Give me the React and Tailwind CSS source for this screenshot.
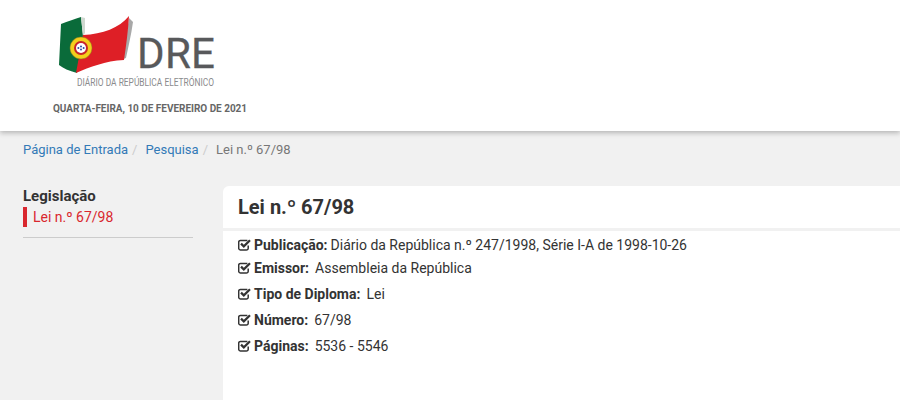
const rows = [
  ["Publicação:", "Diário da República n.º 247/1998, Série I-A de 1998-10-26", "h-[20px]", "ml-[3px]"],
  ["Emissor:", "Assembleia da República", "h-[26px]", "ml-[6px]"],
  ["Tipo de Diploma:", "Lei", "h-[26px]", "ml-[6px]"],
  ["Número:", "67/98", "h-[26px]", "ml-[6px]"],
  ["Páginas:", "5536 - 5546", "h-[26px]", "ml-[6px]"],
];

function Check() {
  return (
    <svg width="13" height="13" viewBox="0 0 13 13" className="shrink-0 mr-[3px] mb-[2px]" fill="none">
      <path d="M10.2 7.4V10.2A1.8 1.8 0 0 1 8.4 12H2.4A1.8 1.8 0 0 1 .7 10.2V4.2A1.8 1.8 0 0 1 2.4 2.4H9.4" stroke="#333" strokeWidth="1.5" />
      <path d="M3 5.6L5.8 8.4L12 2.2" stroke="#333" strokeWidth="2.2" />
    </svg>
  );
}

function Logo() {
  return (
    <svg width="200" height="82" viewBox="0 0 200 82" className="block">
      <path d="M74 8L78 12C76 26 73 38 71 48L66 50C70 34 72 22 74 8Z" fill="#a8a8a8" />
      <path d="M6 14C13 11 20 9 26 7L28 26L22 63C14 61 8 58 4 55Z" fill="#0a6b3a" />
      <path d="M26 7L30 8L30 23L28 26Z" fill="#cfd8d0" />
      <path d="M28 25C48 24 64 18 74 6C73 22 71 36 69 50C50 51 35 57 21 63Z" fill="#de1f26" />
      <circle cx="26" cy="38" r="11" fill="#f4cf1c" />
      <circle cx="26" cy="38" r="11" fill="none" stroke="#8a7a1c" strokeWidth="0.5" />
      <circle cx="26" cy="38" r="7" fill="#c8242b" />
      <circle cx="26" cy="38" r="5" fill="#fff" />
      <circle cx="26" cy="36.4" r="1" fill="#2f4fa0" />
      <circle cx="26" cy="39.6" r="1" fill="#2f4fa0" />
      <circle cx="23.4" cy="38" r="1" fill="#2f4fa0" />
      <circle cx="28.6" cy="38" r="1" fill="#2f4fa0" />
      <text x="82 110 136" y="57.5" fontFamily="Roboto, sans-serif" fontSize="42" fill="#58595b" stroke="#58595b" strokeWidth="0.3">DRE</text>
      <text x="22" y="76" textLength="137" lengthAdjust="spacingAndGlyphs" fontFamily="Roboto, sans-serif" fontSize="10" fill="#8a8b8d">DIÁRIO DA REPÚBLICA ELETRÓNICO</text>
    </svg>
  );
}

export default function App() {
  return (
    <div className="w-[900px] h-[400px] overflow-hidden bg-[#f1f1f1] font-['Roboto',sans-serif] text-sm text-[#333]">
      <header className="h-[131px] bg-white shadow-[0_2px_5px_rgba(0,0,0,0.25)] pt-[10px]">
        <div className="pl-[55px]"><Logo /></div>
        <div className="pl-[53px] mt-[10px] text-[10px] leading-[14px] font-bold text-[#666] tracking-[-0.02px]">QUARTA-FEIRA, 10 DE FEVEREIRO DE 2021</div>
      </header>
      <nav className="flex items-center pl-[23px] h-[39px] text-[13px] text-[#777]">
        <a className="text-[#337ab7]">Página de Entrada</a>
        <span className="text-[#ccc] pl-[4px] pr-[5px]">/</span>
        <a className="text-[#337ab7] ml-[3px]">Pesquisa</a>
        <span className="text-[#ccc] pl-[4px] pr-[5px]">/</span>
        <span className="ml-[3px]">Lei n.º 67/98</span>
      </nav>
      <div className="flex mt-[16px] pl-[23px]">
        <aside className="w-[170px] shrink-0">
          <div className="text-[15px] leading-[18px] font-bold mt-[1px]">Legislação</div>
          <div className="flex items-center h-[20px] mt-[2px] border-l-[4px] border-[#d9272e] pl-[6px] text-[#d9272e]">Lei n.º 67/98</div>
          <div className="border-t border-[#ccc] mt-[10px]" />
        </aside>
        <main className="ml-[30px] flex-1">
          <div className="h-[42px] bg-white rounded-tl-[6px] pl-[15px] flex items-center text-xl font-bold text-[#333]">Lei n.º 67/98</div>
          <div className="mt-[3px] h-[200px] bg-white pl-[15px] pt-[4px]">
            {rows.map(([k, v, h, ml]) => (
              <div key={k} className={`flex items-center ${h}`}>
                <Check />
                <span className="font-bold">{k}</span>
                <span className={ml}>{v}</span>
              </div>
            ))}
          </div>
        </main>
      </div>
    </div>
  );
}
